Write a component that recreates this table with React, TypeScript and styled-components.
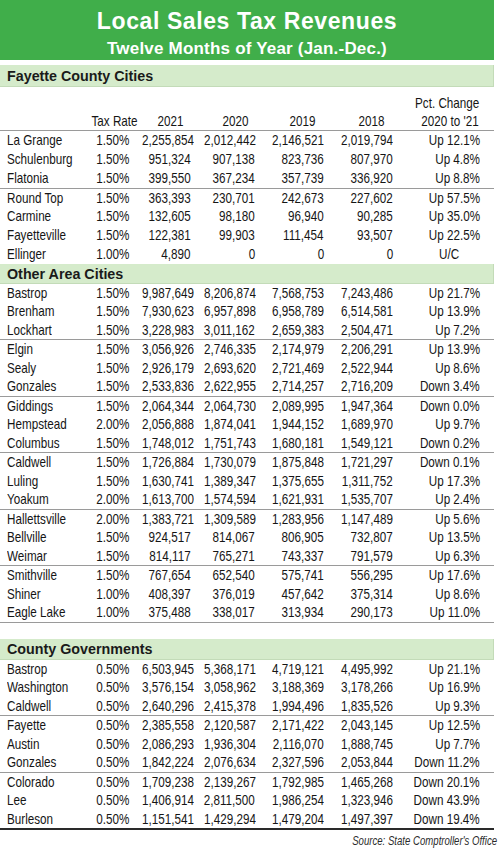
import React from "react";
import styled, { createGlobalStyle } from "styled-components";

const GlobalStyle = createGlobalStyle`
  body {
    margin: 0;
    background: #ffffff;
  }
`;

const SANS = `"Liberation Sans", Arial, Helvetica, sans-serif`;
const COLUMNS = "80px 49px 62px 64px 69px 69px 87px";

type Row = [string, string, string, string, string, string, string];

interface Section {
  title: string;
  rowHeight: number;
  barHeight: number;
  barTop: number;
  showHead?: boolean;
  bottom: "none" | "thin" | "thick";
  groups: Row[][];
}

const sections: Section[] = [
  {
    title: "Fayette County Cities",
    rowHeight: 18.85,
    barHeight: 22,
    barTop: 5,
    showHead: true,
    bottom: "none",
    groups: [
      [
        ["La Grange", "1.50%", "2,255,854", "2,012,442", "2,146,521", "2,019,794", "Up 12.1%"],
        ["Schulenburg", "1.50%", "951,324", "907,138", "823,736", "807,970", "Up 4.8%"],
        ["Flatonia", "1.50%", "399,550", "367,234", "357,739", "336,920", "Up 8.8%"],
      ],
      [
        ["Round Top", "1.50%", "363,393", "230,701", "242,673", "227,602", "Up 57.5%"],
        ["Carmine", "1.50%", "132,605", "98,180", "96,940", "90,285", "Up 35.0%"],
        ["Fayetteville", "1.50%", "122,381", "99,903", "111,454", "93,507", "Up 22.5%"],
        ["Ellinger", "1.00%", "4,890", "0", "0", "0", "U/C"],
      ],
    ],
  },
  {
    title: "Other Area Cities",
    rowHeight: 18.5,
    barHeight: 20,
    barTop: 0,
    bottom: "thin",
    groups: [
      [
        ["Bastrop", "1.50%", "9,987,649", "8,206,874", "7,568,753", "7,243,486", "Up 21.7%"],
        ["Brenham", "1.50%", "7,930,623", "6,957,898", "6,958,789", "6,514,581", "Up 13.9%"],
        ["Lockhart", "1.50%", "3,228,983", "3,011,162", "2,659,383", "2,504,471", "Up 7.2%"],
      ],
      [
        ["Elgin", "1.50%", "3,056,926", "2,746,335", "2,174,979", "2,206,291", "Up 13.9%"],
        ["Sealy", "1.50%", "2,926,179", "2,693,620", "2,721,469", "2,522,944", "Up 8.6%"],
        ["Gonzales", "1.50%", "2,533,836", "2,622,955", "2,714,257", "2,716,209", "Down 3.4%"],
      ],
      [
        ["Giddings", "1.50%", "2,064,344", "2,064,730", "2,089,995", "1,947,364", "Down 0.0%"],
        ["Hempstead", "2.00%", "2,056,888", "1,874,041", "1,944,152", "1,689,970", "Up 9.7%"],
        ["Columbus", "1.50%", "1,748,012", "1,751,743", "1,680,181", "1,549,121", "Down 0.2%"],
      ],
      [
        ["Caldwell", "1.50%", "1,726,884", "1,730,079", "1,875,848", "1,721,297", "Down 0.1%"],
        ["Luling", "1.50%", "1,630,741", "1,389,347", "1,375,655", "1,311,752", "Up 17.3%"],
        ["Yoakum", "2.00%", "1,613,700", "1,574,594", "1,621,931", "1,535,707", "Up 2.4%"],
      ],
      [
        ["Hallettsville", "2.00%", "1,383,721", "1,309,589", "1,283,956", "1,147,489", "Up 5.6%"],
        ["Bellville", "1.50%", "924,517", "814,067", "806,905", "732,807", "Up 13.5%"],
        ["Weimar", "1.50%", "814,117", "765,271", "743,337", "791,579", "Up 6.3%"],
      ],
      [
        ["Smithville", "1.50%", "767,654", "652,540", "575,741", "556,295", "Up 17.6%"],
        ["Shiner", "1.00%", "408,397", "376,019", "457,642", "375,314", "Up 8.6%"],
        ["Eagle Lake", "1.00%", "375,488", "338,017", "313,934", "290,173", "Up 11.0%"],
      ],
    ],
  },
  {
    title: "County Governments",
    rowHeight: 18.5,
    barHeight: 21,
    barTop: 16,
    bottom: "thick",
    groups: [
      [
        ["Bastrop", "0.50%", "6,503,945", "5,368,171", "4,719,121", "4,495,992", "Up 21.1%"],
        ["Washington", "0.50%", "3,576,154", "3,058,962", "3,188,369", "3,178,266", "Up 16.9%"],
        ["Caldwell", "0.50%", "2,640,296", "2,415,378", "1,994,496", "1,835,526", "Up 9.3%"],
      ],
      [
        ["Fayette", "0.50%", "2,385,558", "2,120,587", "2,171,422", "2,043,145", "Up 12.5%"],
        ["Austin", "0.50%", "2,086,293", "1,936,304", "2,116,070", "1,888,745", "Up 7.7%"],
        ["Gonzales", "0.50%", "1,842,224", "2,076,634", "2,327,596", "2,053,844", "Down 11.2%"],
      ],
      [
        ["Colorado", "0.50%", "1,709,238", "2,139,267", "1,792,985", "1,465,268", "Down 20.1%"],
        ["Lee", "0.50%", "1,406,914", "2,811,500", "1,986,254", "1,323,946", "Down 43.9%"],
        ["Burleson", "0.50%", "1,151,541", "1,429,294", "1,479,204", "1,497,397", "Down 19.4%"],
      ],
    ],
  },
];

const Page = styled.div`
  width: 494px;
  font-family: ${SANS};
  color: #151515;
`;

const Banner = styled.header`
  height: 60px;
  box-sizing: border-box;
  padding-top: 8px;
  background: #40ae4a;
  color: #ffffff;
  font-weight: bold;
  text-align: center;
  display: flex;
  flex-direction: column;
`;

const Title = styled.div`
  font-size: 23px;
  line-height: 26px;
  letter-spacing: 0.6px;
`;

const Subtitle = styled.div`
  margin-top: 5px;
  font-size: 17px;
  line-height: 20px;
  letter-spacing: 0.2px;
`;

const SectionBar = styled.div<{ $height: number; $top: number }>`
  height: ${(p) => p.$height}px;
  margin-top: ${(p) => p.$top}px;
  padding-left: 7px;
  display: flex;
  align-items: center;
  background: #d5ebcb;
  box-shadow: inset -1px -1px 0 #c3dbb8;
  font-weight: bold;
  font-size: 14.3px;
  color: #1a1a1a;
`;

/* the print face is a narrow grotesque; squeeze Liberation Sans to its width */
const Narrow = styled.span<{ $from: "left" | "right" }>`
  display: inline-block;
  transform: scaleX(0.8);
  transform-origin: ${(p) => p.$from} center;
`;

const HeadRow = styled.div`
  display: grid;
  grid-template-columns: ${COLUMNS};
  align-items: end;
  padding-top: 7px;
  border-bottom: 1px solid #9a9a9a;
  font-size: 14.6px;
  line-height: 18px;
`;

const HeadCell = styled.div<{ $pad: number }>`
  text-align: right;
  white-space: nowrap;
  padding-right: ${(p) => Math.max(p.$pad, 0)}px;
  margin-right: ${(p) => Math.min(p.$pad, 0)}px;
`;

const Group = styled.div<{ $rule: boolean }>`
  border-top: ${(p) => (p.$rule ? "1px solid #9a9a9a" : "none")};
`;

const DataRow = styled.div<{ $height: number }>`
  display: grid;
  grid-template-columns: ${COLUMNS};
  height: ${(p) => p.$height}px;
  line-height: ${(p) => p.$height}px;
  font-size: 14.6px;
  white-space: nowrap;
`;

const NameCell = styled.div`
  padding-left: 7px;
`;

const NumCell = styled.div<{ $pad?: number }>`
  text-align: right;
  padding-right: ${(p) => p.$pad ?? 0}px;
`;

const Rule = styled.div<{ $kind: "thin" | "thick" }>`
  height: ${(p) => (p.$kind === "thick" ? 2 : 1)}px;
  background: ${(p) => (p.$kind === "thick" ? "#2a2a2a" : "#9a9a9a")};
`;

const Source = styled.div`
  text-align: right;
  font-style: italic;
  font-size: 12px;
  line-height: 13px;
  padding-top: 5px;
  margin-right: -3px;
  color: #2a2a2a;
`;

const heads: [string, number][] = [
  ["", 0],
  ["Tax Rate", -6],
  ["2021", 8],
  ["2020", 7],
  ["2019", 9],
  ["2018", 9],
];

function TableSection({ section }: { section: Section }) {
  return (
    <section>
      <SectionBar $height={section.barHeight} $top={section.barTop}>
        {section.title}
      </SectionBar>
      {section.showHead && (
        <HeadRow>
          {heads.map(([label, pad], i) => (
            <HeadCell key={i} $pad={pad}>
              <Narrow $from="right">{label}</Narrow>
            </HeadCell>
          ))}
          <HeadCell $pad={1}>
            <Narrow $from="right">Pct. Change</Narrow>
            <br />
            <Narrow $from="right">2020 to &apos;21</Narrow>
          </HeadCell>
        </HeadRow>
      )}
      {section.groups.map((group, g) => (
        <Group key={g} $rule={g > 0}>
          {group.map((row) => (
            <DataRow key={row[0]} $height={section.rowHeight}>
              <NameCell>
                <Narrow $from="left">{row[0]}</Narrow>
              </NameCell>
              {row.slice(1, 6).map((v, i) => (
                <NumCell key={i}>
                  <Narrow $from="right">{v}</Narrow>
                </NumCell>
              ))}
              <NumCell $pad={row[6] === "U/C" ? 21 : 0}>
                <Narrow $from="right">{row[6]}</Narrow>
              </NumCell>
            </DataRow>
          ))}
        </Group>
      ))}
      {section.bottom !== "none" && <Rule $kind={section.bottom} />}
    </section>
  );
}

export default function App() {
  return (
    <Page>
      <GlobalStyle />
      <Banner>
        <Title>Local Sales Tax Revenues</Title>
        <Subtitle>Twelve Months of Year (Jan.-Dec.)</Subtitle>
      </Banner>
      {sections.map((s) => (
        <TableSection key={s.title} section={s} />
      ))}
      <Source>
        <Narrow $from="right">Source: State Comptroller&apos;s Office</Narrow>
      </Source>
    </Page>
  );
}
